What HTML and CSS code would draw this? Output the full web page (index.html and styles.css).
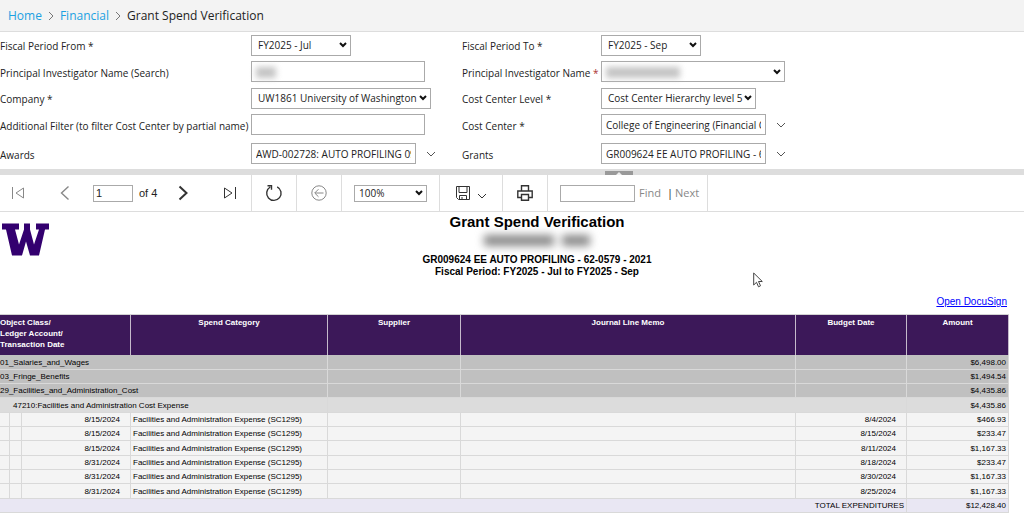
FILE: index.html
```
<!DOCTYPE html>
<html lang="en">
<head>
<meta charset="utf-8">
<title>Grant Spend Verification</title>
<link rel="stylesheet" href="styles.css">
</head>
<body>
<nav class="breadcrumb" aria-label="Breadcrumb">
  <a href="#">Home</a>
  <svg class="crumb-sep" viewBox="0 0 6 10"><path d="M1 1l4 4-4 4"/></svg>
  <a href="#">Financial</a>
  <svg class="crumb-sep" viewBox="0 0 6 10"><path d="M1 1l4 4-4 4"/></svg>
  <span>Grant Spend Verification</span>
</nav>

<form class="params">
  <label for="from">Fiscal Period From *</label>
  <div class="field"><select id="from" class="w-short"><option>FY2025 - Jul</option></select></div>
  <label for="to">Fiscal Period To *</label>
  <div class="field"><select id="to" class="w-short"><option>FY2025 - Sep</option></select></div>

  <label for="pisearch">Principal Investigator Name (Search)</label>
  <div class="field"><input id="pisearch" class="w-text" type="text"><span class="redacted redacted-sm"></span></div>
  <label for="pi">Principal Investigator Name <span class="req">*</span></label>
  <div class="field"><select id="pi" class="w-pi"><option></option></select><span class="redacted redacted-md"></span></div>

  <label for="company">Company *</label>
  <div class="field"><select id="company" class="w-company"><option>UW1861 University of Washington</option></select></div>
  <label for="level">Cost Center Level *</label>
  <div class="field"><select id="level" class="w-level"><option>Cost Center Hierarchy level 5</option></select></div>

  <label for="filter">Additional Filter (to filter Cost Center by partial name)</label>
  <div class="field"><input id="filter" class="w-text" type="text"></div>
  <label for="center">Cost Center *</label>
  <div class="field"><input id="center" class="w-multi" type="text" value="College of Engineering (Financial Cost Center)"><button type="button" class="drop" aria-label="Choose cost center"><svg viewBox="0 0 10 6"><path d="M1 1l4 4 4-4"/></svg></button></div>

  <label for="awards">Awards</label>
  <div class="field"><input id="awards" class="w-multi" type="text" value="AWD-002728: AUTO PROFILING 09"><button type="button" class="drop" aria-label="Choose awards"><svg viewBox="0 0 10 6"><path d="M1 1l4 4 4-4"/></svg></button></div>
  <label for="grants">Grants</label>
  <div class="field"><input id="grants" class="w-multi" type="text" value="GR009624 EE AUTO PROFILING - 62-0579 - 2021"><button type="button" class="drop" aria-label="Choose grants"><svg viewBox="0 0 10 6"><path d="M1 1l4 4 4-4"/></svg></button></div>
</form>

<div class="splitter"><button type="button" aria-label="Collapse parameters"><svg viewBox="0 0 6 3"><path d="M0 3l3-3 3 3z"/></svg></button></div>

<div class="toolbar" role="toolbar">
  <div class="group pager">
    <button type="button" class="muted" aria-label="First page"><svg width="14" height="12" viewBox="0 0 14 12"><path d="M1.500 0v12M12.500 1v10L5 6z"/></svg></button>
    <button type="button" class="muted" aria-label="Previous page"><svg class="bold" width="10" height="16" viewBox="0 0 10 16"><path d="M8.500 1.500L1.500 8l7 6.500"/></svg></button>
    <span class="page-box"><input type="text" value="1" aria-label="Page"><span>of 4</span></span>
    <button type="button" aria-label="Next page"><svg class="heavy" width="10" height="16" viewBox="0 0 10 16"><path d="M1.500 1.500L8.500 8l-7 6.500"/></svg></button>
    <button type="button" class="last" aria-label="Last page"><svg width="14" height="12" viewBox="0 0 14 12"><path d="M12.500 0v12M1.500 1v10L9 6z"/></svg></button>
  </div>
  <div class="group g-icon"><button type="button" aria-label="Refresh"><svg class="bold" width="18" height="18" viewBox="0 0 18 18"><path d="M12.200 2.800A7.200 7.200 0 1 1 5.200 3M2.500 1.700h4v4"/></svg></button></div>
  <div class="group g-icon"><button type="button" class="muted" aria-label="Back"><svg width="16" height="16" viewBox="0 0 16 16"><circle cx="8" cy="8" r="7.200"/><path d="M12.500 8H4M7.500 4.200L3.700 8l3.800 3.800"/></svg></button></div>
  <div class="group g-zoom"><select aria-label="Zoom"><option>100%</option></select></div>
  <div class="group g-save"><button type="button" aria-label="Export"><svg width="14" height="14" viewBox="0 0 14 14"><path d="M.5.500h13v13H2.500l-2-2zM3 .5V6.500h8V.5M3.500 13.500V9.500h7v4M6 11v2.500"/></svg><svg class="caret" width="10" height="6" viewBox="0 0 10 6"><path d="M1 1l4 4 4-4"/></svg></button></div>
  <div class="group g-print"><button type="button" aria-label="Print"><svg class="bold" width="16" height="16" viewBox="0 0 16 16"><path d="M4.500 6V.8h7V6M4 12.500H.8V6h14.400v6.500H12M4.500 9.500h7v5.700h-7z"/></svg></button></div>
  <div class="group g-find"><input type="text" aria-label="Find text"><button type="button">Find</button><i>|</i><button type="button">Next</button></div>
</div>

<main class="report">
  <header class="report-head">
    <svg class="logo" viewBox="0 0 47 32" role="img" aria-label="University of Washington"><path d="M0 0h17v6h-4l4 15L22 6V0h6v6l4 15L37 6h-3V0h13v6h-4L37 32H28L24 18 20 32H10L4 6H0z"/></svg>
    <div class="titles">
      <h1>Grant Spend Verification</h1>
      <div class="redacted-title"><span></span><span></span></div>
      <p>GR009624 EE AUTO PROFILING - 62-0579 - 2021</p>
      <p>Fiscal Period: FY2025 - Jul to FY2025 - Sep</p>
    </div>
  </header>
  <div class="sign"><a href="#">Open DocuSign</a></div>
  <table>
    <colgroup><col class="c-a"><col class="c-b"><col class="c-date"><col class="c-cat"><col class="c-sup"><col><col class="c-bud"><col class="c-amt"></colgroup>
    <thead>
      <tr><th colspan="3" class="first">Object Class/<br>Ledger Account/<br>Transaction Date</th><th>Spend Category</th><th>Supplier</th><th>Journal Line Memo</th><th>Budget Date</th><th>Amount</th></tr>
    </thead>
    <tbody>
      <tr class="class"><td colspan="4" class="flush">01_Salaries_and_Wages</td><td></td><td></td><td></td><td class="num">$6,498.00</td></tr>
      <tr class="class"><td colspan="4" class="flush">03_Fringe_Benefits</td><td></td><td></td><td></td><td class="num">$1,494.54</td></tr>
      <tr class="class"><td colspan="4" class="flush">29_Facilities_and_Administration_Cost</td><td></td><td></td><td></td><td class="num">$4,435.86</td></tr>
      <tr class="account"><td colspan="4" class="indent">47210:Facilities and Administration Cost Expense</td><td colspan="3"></td><td class="num">$4,435.86</td></tr>
      <tr><td></td><td></td><td class="date">8/15/2024</td><td>Facilities and Administration Expense (SC1295)</td><td></td><td></td><td class="date">8/4/2024</td><td class="num">$466.93</td></tr>
      <tr><td></td><td></td><td class="date">8/15/2024</td><td>Facilities and Administration Expense (SC1295)</td><td></td><td></td><td class="date">8/15/2024</td><td class="num">$233.47</td></tr>
      <tr><td></td><td></td><td class="date">8/15/2024</td><td>Facilities and Administration Expense (SC1295)</td><td></td><td></td><td class="date">8/11/2024</td><td class="num">$1,167.33</td></tr>
      <tr><td></td><td></td><td class="date">8/31/2024</td><td>Facilities and Administration Expense (SC1295)</td><td></td><td></td><td class="date">8/18/2024</td><td class="num">$233.47</td></tr>
      <tr><td></td><td></td><td class="date">8/31/2024</td><td>Facilities and Administration Expense (SC1295)</td><td></td><td></td><td class="date">8/30/2024</td><td class="num">$1,167.33</td></tr>
      <tr><td></td><td></td><td class="date">8/31/2024</td><td>Facilities and Administration Expense (SC1295)</td><td></td><td></td><td class="date">8/25/2024</td><td class="num">$1,167.33</td></tr>
      <tr class="total"><td colspan="7" class="num">TOTAL EXPENDITURES</td><td class="num">$12,428.40</td></tr>
    </tbody>
  </table>
</main>
<svg class="cursor" viewBox="0 0 10 16"><path d="M.7 1v12l2.800-2.700 2 4.500 2-1-2-4.300h3.800z"/></svg>
</body>
</html>
```
FILE: styles.css
```
* { box-sizing: border-box; }
body { margin: 0; background: #fff; color: #222; font: 10px/14px "Open Sans", "Noto Sans", sans-serif; }
button { padding: 0; border: 0; background: none; font: inherit; color: inherit; }
svg { fill: none; stroke: currentColor; }
input, select { font: inherit; color: #222; background: #fff; border: 1px solid #aaa; border-radius: 0; }
select { appearance: none; background: #fff url("data:image/svg+xml,%3Csvg xmlns='http://www.w3.org/2000/svg' viewBox='0 0 8 6'%3E%3Cpath d='M1 1l3 3 3-3' fill='none' stroke='%23111' stroke-width='2'/%3E%3C/svg%3E") no-repeat right 3px center / 8px 6px; }

.breadcrumb { display: flex; align-items: center; gap: 6px; height: 32px; padding: 0 8px; background: #f3f3f3; border-bottom: 1px solid #ddd; font-size: 12px; line-height: 16px; }
.breadcrumb a { color: #1ba1e2; text-decoration: none; }
.crumb-sep { width: 6px; height: 10px; color: #777; }

.params { display: grid; grid-template-columns: 251px 211px 139px minmax(0, 1fr); grid-template-rows: 26px 27px 26px 27px 31px; align-items: center; }
.params label { padding-top: 2px; white-space: nowrap; }
.req { color: #a33; }
.field { position: relative; display: flex; align-items: center; }
.field input, .field select { height: 21px; padding: 0 4px; }
.field select { padding: 0 12px 0 6px; }
.w-short { width: 100px; }
.w-text { width: 174px; }
.w-pi { width: 184px; }
.w-company { width: 180px; }
.w-level { width: 155px; }
.w-multi { width: 165px; }
.drop { display: flex; margin-left: 10px; color: #555; }
.drop svg { width: 10px; height: 6px; }
.redacted { position: absolute; left: 5px; top: 6px; height: 11px; background: #c4c4c4; filter: blur(3px); }
.redacted-sm { width: 20px; }
.redacted-md { width: 74px; }

.splitter { display: flex; justify-content: center; align-items: flex-end; height: 6px; padding-left: 214px; background: #ddd; }
.splitter button { display: flex; justify-content: center; align-items: center; width: 28px; height: 4px; background: #999; color: #eee; }
.splitter svg { width: 6px; height: 3px; fill: currentColor; stroke: none; }

.toolbar { display: flex; height: 37px; border-bottom: 1px solid #ddd; }
.group { display: flex; align-items: center; justify-content: center; border-right: 1px solid #ddd; }
.group button { display: flex; align-items: center; color: #333; }
.group .muted { color: #888; }
.bold { stroke-width: 1.400; }
.heavy { stroke-width: 2; }
.pager { width: 252px; justify-content: flex-start; padding-left: 11px; }
.pager > * { margin-right: 21px; }
.pager > :first-child { margin-right: 35px; }
.pager > :nth-child(2) { margin-right: 23px; }
.pager > .last { margin: 0 0 0 14px; }
.page-box { display: flex; align-items: center; gap: 6px; }
.page-box input { width: 40px; height: 17px; padding: 0 2px; }
.page-box input, .page-box span { font-family: "Liberation Sans", sans-serif; font-size: 11px; }
.g-icon { width: 45px; }
.g-zoom { width: 98px; }
.g-zoom select { width: 73px; height: 17px; padding: 0 12px 0 4px; }
.g-save { width: 63px; }
.caret { margin: 5px 0 0 7px; }
.g-print { width: 45px; }
.g-find { width: 160px; justify-content: flex-start; padding-left: 12px; font-size: 11px; }
.g-find input { width: 75px; height: 17px; margin-right: 4px; }
.g-find button { color: #888; }
.g-find i { margin: 0 2px 0 6px; font-style: normal; }

.report { padding-right: 15px; color: #000; font-family: "Liberation Sans", sans-serif; }
.report-head { display: grid; grid-template-columns: 65px minmax(0, 1fr); }
.logo { width: 47px; height: 33px; margin: 11px 0 0 2px; fill: #33006f; stroke: none; }
.titles { text-align: center; padding-top: 1px; }
h1 { margin: 0; font-size: 15px; line-height: 18px; }
.redacted-title { display: flex; justify-content: center; gap: 8px; padding: 4px 0 8px; filter: blur(4px); }
.redacted-title span { width: 70px; height: 11px; background: #888; }
.redacted-title span + span { width: 28px; }
.titles p { margin: 0; font-size: 10px; font-weight: bold; line-height: 12px; }
.sign { padding: 17px 2px 5px 0; text-align: right; font-size: 10px; }
.sign a { color: #00f; }

table { width: 100%; table-layout: fixed; border-collapse: separate; border-spacing: 0; font-size: 8px; line-height: 12px; border-top: 1px solid #d3d3d3; }
.c-a { width: 10px; }
.c-b { width: 12px; }
.c-date { width: 109px; }
.c-cat { width: 197px; }
.c-sup { width: 133px; }
.c-bud { width: 111px; }
.c-amt { width: 102px; }
th { height: 40px; padding: 2px; vertical-align: top; background: #3c1859; color: #fff; font-size: 8px; line-height: 11px; border-right: 1px solid #c5bacb; }
th.first { padding-left: 0; text-align: left; }
td { height: 14px; padding: 1px 2px 0; background: #f4f4f4; border-right: 1px solid #d9d9d9; border-bottom: 1px solid #d9d9d9; white-space: nowrap; overflow: hidden; }
tbody tr:nth-child(3n+1) td { height: 15px; }
.flush { padding-left: 0; }
.indent { padding-left: 13px; }
.num { text-align: right; }
.date { text-align: right; padding-right: 10px; }
.class td { background: #c0c0c0; }
.account td { background: #dcdcdc; }
.total td { background: #e9e7f3; }
.cursor { position: absolute; left: 753px; top: 272px; width: 10px; height: 16px; fill: #fff; color: #444; }
```
